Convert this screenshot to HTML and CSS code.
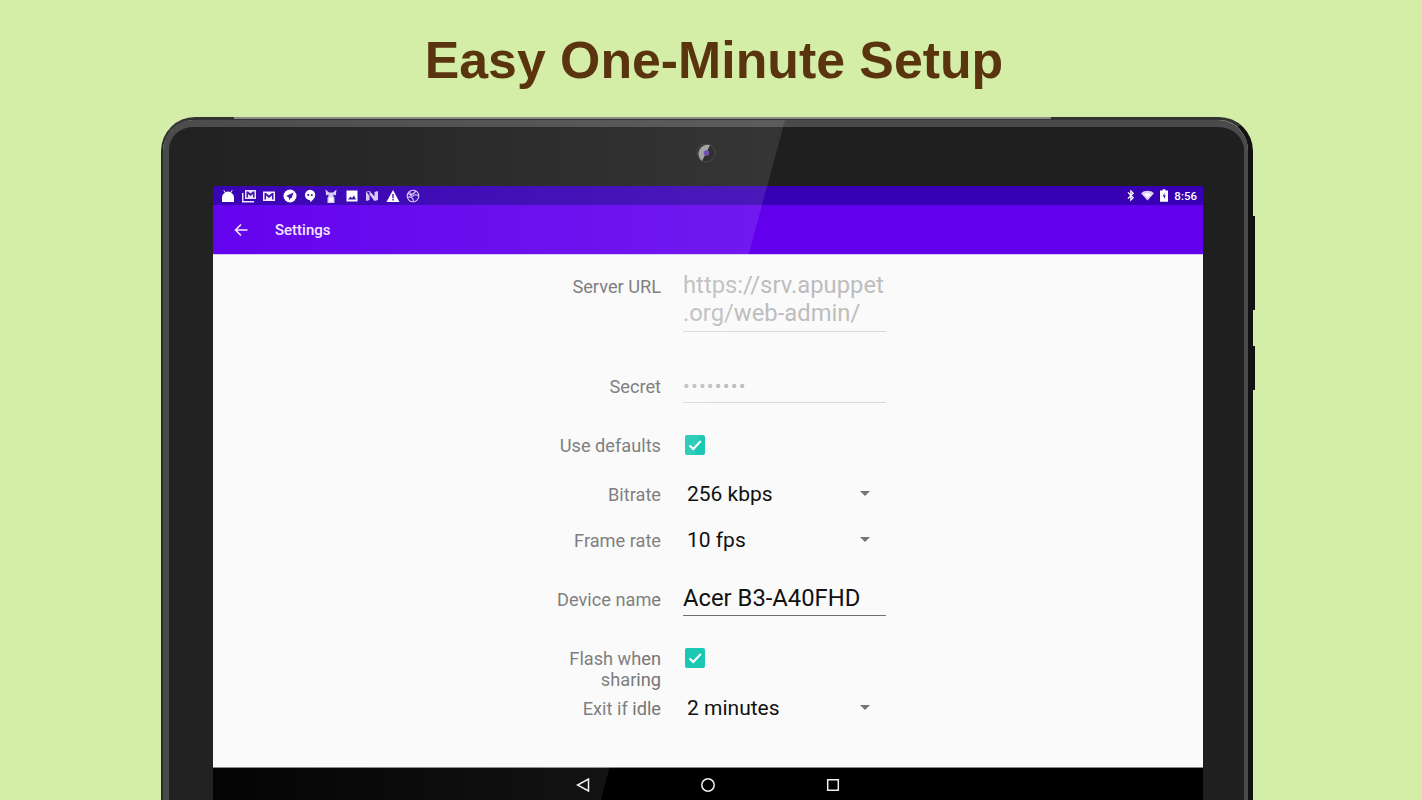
FILE: index.html
```html
<!DOCTYPE html>
<html lang="en">
<head>
    <meta charset="UTF-8">
    <title>Easy One-Minute Setup</title>
    <link rel="stylesheet" href="styles.css">
</head>
<body>
    <h1 class="headline">Easy One-Minute Setup</h1>

    <div class="tablet">
        <span class="top-edge"></span>
        <span class="side-button side-button-top"></span>
        <span class="side-button side-button-bottom"></span>
        <div class="bezel">
            <div class="camera-strip">
                <svg class="camera" viewBox="0 0 20 20">
                    <circle cx="10" cy="10" r="9" fill="#1b1b1b" stroke="#3a3a3a"/>
                    <path d="M14 2.2A9 9 0 0 0 6 18z" fill="#9a9a9a"/>
                    <circle cx="10.500" cy="10" r="2.800" fill="#6a3fb0"/>
                </svg>
            </div>

            <div class="screen">
                <div class="status-bar">
                    <div class="status-icons">
                        <!-- android -->
                        <svg viewBox="0 0 14 14"><path d="M3 1l1.600 2.200a5 5 0 0 1 4.800 0L11 1l.6.4-1.500 2.300A5 5 0 0 1 13 8v5H1V8a5 5 0 0 1 2.900-4.300L2.400 1.400z" fill="#fff"/></svg>
                        <!-- stacked mail -->
                        <svg viewBox="0 0 14 14"><path d="M3 1h11v9H3z" fill="#e8e0f8"/><path d="M4.500 2.500v6h1.500V5l2.500 2L11 5v3.500h1.500v-6H11L8.500 4.500 6 2.500z" fill="#3d10ae"/><path d="M0 4h1.500v8H12v1.500H0z" fill="#e8e0f8"/></svg>
                        <!-- mail -->
                        <svg viewBox="0 0 14 14"><path d="M1 2.500h12v9.500H1z" fill="#f2ecfc"/><path d="M2.500 4v6.500H4V6.500l3 2.500 3-2.500v4h1.500V4H10L7 6.500 4 4z" fill="#3d10ae"/></svg>
                        <!-- telegram -->
                        <svg viewBox="0 0 14 14"><circle cx="7" cy="7" r="6.500" fill="#fff"/><path d="M10.500 3.500L3 7l2.500 1 .8 3 1.500-2 .9-.1z" fill="#3d10ae"/></svg>
                        <!-- hangouts -->
                        <svg viewBox="0 0 14 14"><path d="M7 .8a5.200 5.200 0 0 1 5.200 5.200c0 3-2.700 5.500-5 7.300V11.200A5.200 5.200 0 0 1 7 .8z" fill="#fff"/><circle cx="5.200" cy="6" r="1.100" fill="#3d10ae"/><circle cx="8.800" cy="6" r="1.100" fill="#3d10ae"/></svg>
                        <!-- puppet -->
                        <svg viewBox="0 0 14 14"><path d="M1.500 .5l3.500 3h4l3.500-3-.7 6-2.300-1v2l1 1v5.500H3.500V8.500l1-1v-2l-2.300 1z" fill="#d9cdf3"/><path d="M5 8.500h4v4H5z" fill="#fff"/></svg>
                        <!-- image -->
                        <svg viewBox="0 0 14 14"><path d="M1.500 1.500h11v11h-11z" fill="#fff"/><path d="M3 10.500l2.500-3 1.500 1.500 2-2.500 2 4z" fill="#3d10ae"/></svg>
                        <!-- N -->
                        <svg viewBox="0 0 14 14"><path d="M1 2l3.500 1v4zM1 2v10l3.500-1V5.500L9.500 12l3.500-1V2l-3.500 1v4.500L4.500 2z" fill="#d5c8f2"/></svg>
                        <!-- warning -->
                        <svg viewBox="0 0 14 14"><path d="M7 1l6.500 12H.5z" fill="#fff"/><path d="M6.300 5h1.400v4.200H6.300zM6.300 10h1.400v1.400H6.300z" fill="#3d10ae"/></svg>
                        <!-- globe -->
                        <svg viewBox="0 0 14 14" fill="none" stroke="#d5c8f2" stroke-width="1.100"><circle cx="7" cy="7" r="5.800"/><path d="M2 4.500c3 2 7 0 8-3M1.500 8.500c3-1.500 6 0 6 4M7 7c2-2 4-1.500 5.500 0M4 2.500c-.5 3 .5 5 3 4.500"/></svg>
                    </div>
                    <div class="status-right">
                        <!-- bluetooth -->
                        <svg class="bt-icon" viewBox="0 0 9 14"><path d="M1 3.500l6 6-2.700 2.700V1.800L7 4.500l-6 6" fill="none" stroke="#fff" stroke-width="1.400"/></svg>
                        <!-- wifi -->
                        <svg class="wifi-icon" viewBox="0 0 13 11"><path d="M0 3.300C3.500 0 9.500 0 13 3.300L6.500 10.500z" fill="#dcd0f5"/><path d="M3 4.200c2-1.300 5-1.300 7 0L6.500 8z" fill="#fff"/></svg>
                        <!-- battery -->
                        <svg class="battery-icon" viewBox="0 0 9 14"><path d="M3 0h3v1.500h3V14H0V1.500h3z" fill="#fff"/><path d="M5.200 4L3 8h1.500v3l2-4H5z" fill="#3d10ae"/></svg>
                        <span class="clock">8:56</span>
                    </div>
                </div>

                <div class="app-bar">
                    <svg class="back-arrow" viewBox="0 0 14 14"><path d="M13.500 7H2M7 1.500L1.500 7 7 12.500" fill="none" stroke="#f3e8ff" stroke-width="1.600"/></svg>
                    <span class="app-title">Settings</span>
                </div>

                <div class="settings">
                    <div class="row row-url">
                        <label class="row-label">Server URL</label>
                        <div class="text-field">https://srv.apuppet<br>.org/web-admin/</div>
                    </div>
                    <div class="row row-secret">
                        <label class="row-label">Secret</label>
                        <div class="text-field secret-field">••••••••</div>
                    </div>
                    <div class="row row-defaults">
                        <label class="row-label">Use defaults</label>
                        <div class="check-cell">
                            <svg class="checkbox" viewBox="0 0 20 20"><rect width="20" height="20" rx="2" fill="#1cc8b4"/><path d="M4.500 10.500l3.800 3.500 7.500-8" fill="none" stroke="#fff" stroke-width="2"/></svg>
                        </div>
                    </div>
                    <div class="row row-bitrate">
                        <label class="row-label">Bitrate</label>
                        <div class="select-field">256 kbps<span class="select-arrow"></span></div>
                    </div>
                    <div class="row row-frame">
                        <label class="row-label">Frame rate</label>
                        <div class="select-field">10 fps<span class="select-arrow"></span></div>
                    </div>
                    <div class="row row-device">
                        <label class="row-label">Device name</label>
                        <div class="text-field device-field">Acer B3-A40FHD</div>
                    </div>
                    <div class="row row-flash">
                        <label class="row-label">Flash when<br>sharing</label>
                        <div class="check-cell">
                            <svg class="checkbox" viewBox="0 0 20 20"><rect width="20" height="20" rx="2" fill="#1cc8b4"/><path d="M4.500 10.500l3.800 3.500 7.500-8" fill="none" stroke="#fff" stroke-width="2"/></svg>
                        </div>
                    </div>
                    <div class="row row-idle">
                        <label class="row-label">Exit if idle</label>
                        <div class="select-field">2 minutes<span class="select-arrow"></span></div>
                    </div>
                </div>

                <div class="nav-bar">
                    <svg class="nav-icon" viewBox="0 0 14 14"><path d="M12.500 1v12L1.500 7z" fill="none" stroke="#eee" stroke-width="1.500"/></svg>
                    <svg class="nav-icon" viewBox="0 0 14 14"><circle cx="7" cy="7" r="6.200" fill="none" stroke="#eee" stroke-width="1.500"/></svg>
                    <svg class="nav-icon" viewBox="0 0 14 14"><path d="M1.700 1.700h10.600v10.600H1.700z" fill="none" stroke="#eee" stroke-width="1.500"/></svg>
                </div>
            </div>
        </div>
        <div class="glare"></div>
    </div>
</body>
</html>
```

FILE: styles.css
```css
html, body {
    margin: 0;
    height: 800px;
    overflow: hidden;
}
body {
    background-color: #d4eea8;
    font-family: Roboto, sans-serif;
}
.headline {
    margin: 0;
    height: 117px;
    padding: 30px 0 0 6px;
    box-sizing: border-box;
    text-align: center;
    font-family: "Liberation Sans", Arial, sans-serif;
    font-size: 51.800px;
    line-height: 60px;
    font-weight: bold;
    color: #5a340e;
}

/* tablet frame */
.tablet {
    position: relative;
    width: 1092px;
    margin-left: 161px;
    box-sizing: border-box;
    border-top: 3px solid #333;
    border-left: 2px solid #2a2a2a;
    border-right: 5px solid #121212;
    border-radius: 34px 34px 0 0;
}
.top-edge {
    position: absolute;
    top: -3px;
    left: 71px;
    width: 817px;
    height: 2px;
    background-color: #8a8a8a;
}
.bezel {
    background-color: #1f1f1f;
    border-top: 7px solid #4a4a4a;
    border-left: 6px solid #484848;
    border-right: 4px solid #4a4a4a;
    border-radius: 30px 30px 0 0;
    padding: 0 41px 0 44px;
}
.side-button {
    position: absolute;
    right: -7px;
    width: 2px;
    background-color: #111;
}
.side-button-top {
    top: 96px;
    height: 94px;
}
.side-button-bottom {
    top: 226px;
    height: 44px;
}
.camera-strip {
    height: 59px;
    display: flex;
    justify-content: center;
    padding: 0 4px 8px 0;
    box-sizing: border-box;
    align-items: center;
}
.camera {
    width: 20px;
    height: 20px;
}
.glare {
    position: absolute;
    top: 0;
    left: 0;
    width: 625px;
    height: 683px;
    background: linear-gradient(to right, rgba(255, 255, 255, 0.01) 5%, rgba(255, 255, 255, 0.1) 100%);
    clip-path: polygon(0 0, 622px 0, 437px 683px, 0 683px);
    pointer-events: none;
}

/* android screen */
.screen {
    height: 614px;
    display: flex;
    flex-direction: column;
    background-color: #fafafa;
}
.status-bar {
    height: 19px;
    flex: none;
    display: flex;
    justify-content: space-between;
    align-items: center;
    background-color: #3700b3;
    padding: 0 6px 0 8px;
}
.status-icons {
    display: flex;
    gap: 6.600px;
}
.status-icons svg {
    width: 14px;
    height: 14px;
}
.status-right {
    display: flex;
    align-items: center;
    color: #fff;
    font-size: 11.500px;
    font-weight: 500;
}
.bt-icon {
    width: 8px;
    height: 13px;
}
.wifi-icon {
    width: 13px;
    height: 11px;
    margin-left: 6px;
}
.battery-icon {
    width: 8px;
    height: 13px;
    margin-left: 6px;
}
.clock {
    margin-left: 6px;
}
.app-bar {
    height: 50px;
    flex: none;
    display: flex;
    align-items: center;
    background-color: #6200ee;
    color: #f3e8ff;
    border-bottom: 1px solid #d8c8f4;
    box-sizing: border-box;
}
.back-arrow {
    width: 14px;
    height: 14px;
    margin-left: 21px;
}
.app-title {
    margin-left: 27px;
    font-size: 15px;
    font-weight: 500;
}

/* form */
.settings {
    flex: 1;
    display: flex;
    flex-direction: column;
}
.row {
    display: flex;
    gap: 22px;
    flex: none;
}
.row-label {
    width: 448px;
    flex: none;
    text-align: right;
    font-size: 18.200px;
    line-height: 21px;
    color: #757575;
}
.text-field {
    width: 203px;
    box-sizing: border-box;
    font-size: 23.800px;
    line-height: 28px;
    color: #bdbdbd;
    border-bottom: 1px solid #d8d8d8;
}
.row-url {
    height: 61px;
    margin-top: 16px;
}
.row-url .row-label {
    padding-top: 5px;
}
.row-secret {
    height: 31px;
    margin-top: 40px;
}
.row-secret .row-label {
    padding-top: 4px;
}
.secret-field {
    font-size: 20px;
    letter-spacing: 1.200px;
}
.check-cell {
    padding-left: 2px;
}
.checkbox {
    display: block;
    width: 20px;
    height: 20px;
}
.row-defaults {
    margin-top: 32px;
    height: 36px;
}
.select-field {
    width: 183px;
    padding-left: 4px;
    display: flex;
    justify-content: space-between;
    align-items: center;
    height: 28px;
    font-size: 21px;
    color: #111;
}
.select-arrow {
    width: 0;
    height: 0;
    border-left: 5.500px solid transparent;
    border-right: 5.500px solid transparent;
    border-top: 5.500px solid #757575;
    margin-top: -2px;
}
.row-bitrate {
    margin-top: 9px;
    height: 28px;
    align-items: center;
}
.row-frame {
    margin-top: 18px;
    height: 28px;
    align-items: center;
}
.row-device {
    margin-top: 26px;
    height: 36px;
}
.row-device .row-label {
    padding-top: 9px;
}
.device-field {
    height: 36px;
    padding-top: 4px;
    color: #111;
    border-bottom: 1px solid #6f6f6f;
}
.row-flash {
    margin-top: 32px;
    height: 42px;
}
.row-idle {
    margin-top: 4px;
    height: 28px;
    align-items: center;
}

.nav-bar {
    height: 33px;
    flex: none;
    display: flex;
    justify-content: center;
    gap: 111px;
    align-items: center;
    background-color: #000;
    border-top: 1px solid #8a8a8a;
    box-sizing: border-box;
    padding: 1px 1px 0 0;
}
.nav-icon {
    width: 14px;
    height: 14px;
}
```
